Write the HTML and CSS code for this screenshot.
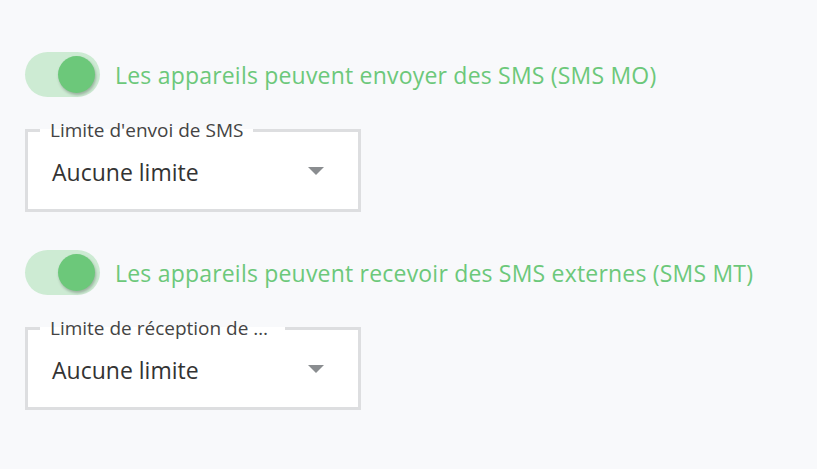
FILE: index.html
```html
<html>
  <head>
    <title>SMS</title>
    <meta name="viewport" content="width=device-width, initial-scale=1" />
    <link rel="stylesheet" href="styles.css">
  </head>
  <body>
    <main>
      <div class="option">
        <div class="toggle-row">
          <span class="toggle on"><span class="knob"></span></span>
          <span class="toggle-label">Les appareils peuvent envoyer des SMS (SMS MO)</span>
        </div>
        <fieldset class="field">
          <legend>Limite d'envoi de SMS</legend>
          <div class="select">
            <span class="value">Aucune limite</span>
            <span class="arrow"></span>
          </div>
        </fieldset>
      </div>
      <div class="option">
        <div class="toggle-row">
          <span class="toggle on"><span class="knob"></span></span>
          <span class="toggle-label">Les appareils peuvent recevoir des SMS externes (SMS MT)</span>
        </div>
        <fieldset class="field">
          <legend class="truncated">Limite de réception de …</legend>
          <div class="select">
            <span class="value">Aucune limite</span>
            <span class="arrow"></span>
          </div>
        </fieldset>
      </div>
    </main>
  </body>
</html>
```

FILE: styles.css
```css
body {
  margin: 0;
  background-color: #f8f9fb;
  font-family: 'Open Sans', 'Noto Sans', sans-serif;
}

main {
  padding: 52px 25px 0 25px;
}

.option {
  margin-bottom: 38px;
}

.toggle-row {
  display: flex;
  align-items: center;
  gap: 15px;
}

.toggle {
  display: flex;
  align-items: center;
  justify-content: flex-end;
  box-sizing: border-box;
  width: 75px;
  height: 45px;
  padding-right: 5px;
  border-radius: 23px;
  background-color: #cdebd3;
}

.toggle .knob {
  width: 37px;
  height: 37px;
  border-radius: 50%;
  background-color: #6cc87a;
  box-shadow: 1px 2px 3px rgba(0, 0, 0, 0.25);
}

.toggle-label {
  color: #6cc87a;
  font-size: 23px;
  line-height: 28px;
  letter-spacing: 0.2px;
}

.field {
  box-sizing: border-box;
  width: 336px;
  height: 92px;
  margin: 23px 0 0 0;
  padding: 0;
  border: 3px solid #dddee0;
  background-color: #fff;
}

.field legend {
  margin-left: 12px;
  padding: 0 10px;
  font-size: 19px;
  line-height: 20px;
  color: #444;
}

.field legend.truncated {
  padding-right: 17px;
}

.select {
  display: flex;
  align-items: center;
  justify-content: space-between;
  height: 60px;
  padding: 2px 34px 0 24px;
}

.select .value {
  font-size: 23px;
  color: #333;
}

.select .arrow {
  width: 0;
  height: 0;
  margin-top: -2px;
  border-left: 8px solid transparent;
  border-right: 8px solid transparent;
  border-top: 8px solid #8a8d90;
}
```
